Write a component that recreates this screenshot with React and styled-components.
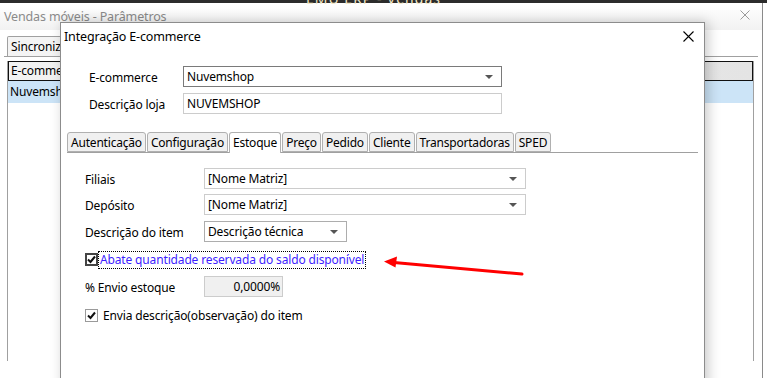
import React from "react";
import styled, { createGlobalStyle } from "styled-components";

const Global = createGlobalStyle`
  html, body { margin: 0; padding: 0; background: #fff; }
  body { font-family: "Noto Sans", "Open Sans", sans-serif; font-size: 12px; color: #000; letter-spacing: -0.15px; }
  #root { width: 767px; height: 378px; overflow: hidden; position: relative; }
`;

const Screen = styled.div`
  position: relative;
  width: 767px;
  height: 378px;
  overflow: hidden;
  background: #fff;
  display: flex;
  flex-direction: column;
`;

const TopStrip = styled.div`
  height: 3px;
  background: #2b2b2b;
  flex: none;
`;

const BgWindow = styled.div`
  flex: 1;
  display: flex;
  flex-direction: column;
  border-right: 1px solid #8a8a8a;
  margin-right: 4px;
`;

const BgTitle = styled.div`
  height: 27px;
  display: flex;
  align-items: center;
  justify-content: space-between;
  padding: 0 12px 0 4px;
  background: linear-gradient(#ffffff, #f2f2f2);
  color: #8a8a8a;
  font-size: 12.5px;
`;

const LightClose = styled.svg`
  width: 10px;
  height: 10px;
  margin-top: -4px;
`;

const BgBody = styled.div`
  padding: 6px 4px 0 4px;
  display: flex;
  flex-direction: column;
`;

const BgTabRow = styled.div`
  display: flex;
  border-bottom: 1px solid #a0a0a0;
  padding-left: 3px;
`;

const BgTab = styled.div`
  border: 1px solid #a0a0a0;
  border-bottom: none;
  border-radius: 2px 2px 0 0;
  height: 17px;
  padding: 1px 0;
  line-height: 17px;
  width: 120px;
  background: #f4f4f4;
`;

const Clip = styled.span`
  display: block;
  width: ${(p) => p.$w}px;
  padding-left: ${(p) => p.$pl || 0}px;
  overflow: hidden;
  white-space: nowrap;
`;

const Grid = styled.div`
  margin: 4px 4px 0 3px;
  border-left: 1px solid #a0a0a0;
  border-right: 1px solid #a0a0a0;
  height: 300px;
`;

const GridHeader = styled.div`
  height: 18px;
  line-height: 18px;
  border: 1px solid #111;
  background: linear-gradient(90deg, #f2f2f2, #e4e4e4);
`;

const GridRow = styled.div`
  height: 22px;
  line-height: 22px;
  background: #cce4f7;
`;

const Modal = styled.div`
  position: absolute;
  left: 60px;
  top: 22px;
  width: 643px;
  height: 380px;
  background: #fff;
  border: 1px solid #8c8c8c;
  box-shadow: 3px 0 12px rgba(0, 0, 0, 0.22);
  display: flex;
  flex-direction: column;
`;

const ModalTitle = styled.div`
  height: 26px;
  display: flex;
  align-items: center;
  justify-content: space-between;
  padding: 0 10px 0 3px;
  font-size: 12.5px;
`;

const CloseIcon = styled.svg`
  width: 11px;
  height: 11px;
`;

const Form = styled.div`
  display: flex;
  flex-direction: column;
  gap: 6px;
  padding: 17px 0 0 28px;
`;

const FieldRow = styled.div`
  display: flex;
  align-items: center;
  height: 21px;
  margin-top: ${(p) => p.$mt || 0}px;
`;

const Label = styled.div`
  width: ${(p) => p.$w}px;
  flex: none;
  padding-top: 2px;
`;

const Box = styled.div`
  width: ${(p) => p.$w}px;
  height: 21px;
  box-sizing: border-box;
  border: 1px solid ${(p) => p.$border || "#cccccc"};
  background: ${(p) => p.$bg || "#fff"};
  display: flex;
  align-items: center;
  justify-content: ${(p) => (p.$right ? "flex-end" : "space-between")};
  padding: 0 ${(p) => (p.$right ? 2 : 8)}px 0 3px;
`;

const Arrow = styled.span`
  width: 0;
  height: 0;
  border-left: 4px solid transparent;
  border-right: 4px solid transparent;
  border-top: 4px solid #555;
`;

const TabsWrap = styled.div`
  margin: 17px 6px 0 6px;
`;

const TabRow = styled.div`
  display: flex;
  border-bottom: 1px solid #a0a0a0;
  height: 21px;
  align-items: flex-end;
`;

const Tab = styled.div`
  box-sizing: border-box;
  height: ${(p) => (p.$active ? 21 : 20)}px;
  margin-bottom: ${(p) => (p.$active ? -1 : 0)}px;
  padding: 0 3px;
  margin-right: 1px;
  line-height: 19px;
  border: 1px solid #b0b0b0;
  border-bottom: ${(p) => (p.$active ? "none" : "1px solid #b0b0b0")};
  border-radius: 3px 3px 0 0;
  background: ${(p) => (p.$active ? "#fff" : "#f0f0f0")};
  white-space: nowrap;
  letter-spacing: -0.2px;
`;

const Panel = styled.div`
  padding: 15px 0 0 18px;
  display: flex;
  flex-direction: column;
`;

const Rows = styled.div`
  display: flex;
  flex-direction: column;
  gap: 5px;
`;

const CheckRow = styled.div`
  display: flex;
  align-items: center;
  margin-top: ${(p) => p.$mt}px;
  height: 17px;
`;

const CheckBox = styled.div`
  width: 13px;
  height: 13px;
  box-sizing: border-box;
  border: ${(p) => (p.$focus ? "2px solid #444" : "1px solid #9a9a9a")};
  display: flex;
  align-items: center;
  justify-content: center;
  flex: none;
  background: #fff;
`;

const CheckLabel = styled.span`
  margin-left: ${(p) => (p.$focus ? 1 : 4)}px;
  padding: 0 1px;
  color: ${(p) => (p.$focus ? "#3d1eff" : "#000")};
  outline: ${(p) => (p.$focus ? "1px dotted #000" : "none")};
  line-height: 16px;
`;

const Annotation = styled.svg`
  position: absolute;
  left: 0;
  top: 0;
  width: 767px;
  height: 378px;
  pointer-events: none;
`;

const HiddenTitle = styled.div`
  position: absolute;
  left: 306px;
  top: -11px;
  color: #f4e9c8;
  font-size: 14px;
  letter-spacing: 1px;
`;

const Check = () => (
  <svg width="9" height="9" viewBox="0 0 9 9">
    <path d="M1 4.5 L3.5 7 L8 1.5" stroke="#111" strokeWidth="2" fill="none" />
  </svg>
);

const tabs = ["Autenticação", "Configuração", "Estoque", "Preço", "Pedido", "Cliente", "Transportadoras", "SPED"];

export default function App() {
  return (
    <>
      <Global />
      <Screen>
        <HiddenTitle>EMU ERP - Vendas</HiddenTitle>
        <TopStrip />
        <BgWindow>
          <BgTitle>
            <span>Vendas móveis - Parâmetros</span>
            <LightClose viewBox="0 0 10 10">
              <path d="M0.5 0.5 L9.5 9.5 M9.5 0.5 L0.5 9.5" stroke="#9a9a9a" strokeWidth="1" />
            </LightClose>
          </BgTitle>
          <BgBody>
            <BgTabRow>
              <BgTab>
                <Clip $w={52} $pl={3}>Sincronização</Clip>
              </BgTab>
            </BgTabRow>
            <Grid>
              <GridHeader>
                <Clip $w={50} $pl={2}>E-commerce</Clip>
              </GridHeader>
              <GridRow>
                <Clip $w={51} $pl={2}>Nuvemshop</Clip>
              </GridRow>
            </Grid>
          </BgBody>
        </BgWindow>

        <Modal>
          <ModalTitle>
            <span>Integração E-commerce</span>
            <CloseIcon viewBox="0 0 11 11">
              <path d="M0.5 0.5 L10.5 10.5 M10.5 0.5 L0.5 10.5" stroke="#000" strokeWidth="1.1" />
            </CloseIcon>
          </ModalTitle>
          <Form>
            <FieldRow>
              <Label $w={94}>E-commerce</Label>
              <Box $w={319} $border="#7a7a7a">
                <span>Nuvemshop</span>
                <Arrow />
              </Box>
            </FieldRow>
            <FieldRow>
              <Label $w={94}>Descrição loja</Label>
              <Box $w={319}>
                <span>NUVEMSHOP</span>
              </Box>
            </FieldRow>
          </Form>
          <TabsWrap>
            <TabRow>
              {tabs.map((t) => (
                <Tab key={t} $active={t === "Estoque"}>{t}</Tab>
              ))}
            </TabRow>
            <Panel>
              <Rows>
                <FieldRow>
                  <Label $w={119}>Filiais</Label>
                  <Box $w={322}>
                    <span>[Nome Matriz]</span>
                    <Arrow />
                  </Box>
                </FieldRow>
                <FieldRow>
                  <Label $w={119}>Depósito</Label>
                  <Box $w={322}>
                    <span>[Nome Matriz]</span>
                    <Arrow />
                  </Box>
                </FieldRow>
                <FieldRow $mt={1}>
                  <Label $w={119}>Descrição do item</Label>
                  <Box $w={143} $border="#adadad">
                    <span>Descrição técnica</span>
                    <Arrow />
                  </Box>
                </FieldRow>
              </Rows>
              <CheckRow $mt={9}>
                <CheckBox $focus>
                  <Check />
                </CheckBox>
                <CheckLabel $focus>Abate quantidade reservada do saldo disponível</CheckLabel>
              </CheckRow>
              <FieldRow $mt={8}>
                <Label $w={119}>% Envio estoque</Label>
                <Box $w={79} $bg="#f0f0f0" $right>
                  <span>0,0000%</span>
                </Box>
              </FieldRow>
              <CheckRow $mt={10}>
                <CheckBox>
                  <Check />
                </CheckBox>
                <CheckLabel>Envia descrição(observação) do item</CheckLabel>
              </CheckRow>
            </Panel>
          </TabsWrap>
        </Modal>

        <Annotation viewBox="0 0 767 378">
          <line x1="522" y1="274" x2="394" y2="262.5" stroke="#ff0000" strokeWidth="3" strokeLinecap="round" />
          <polygon points="384,261.5 397,256.5 395.5,267.5" fill="#ff0000" />
        </Annotation>
      </Screen>
    </>
  );
}
